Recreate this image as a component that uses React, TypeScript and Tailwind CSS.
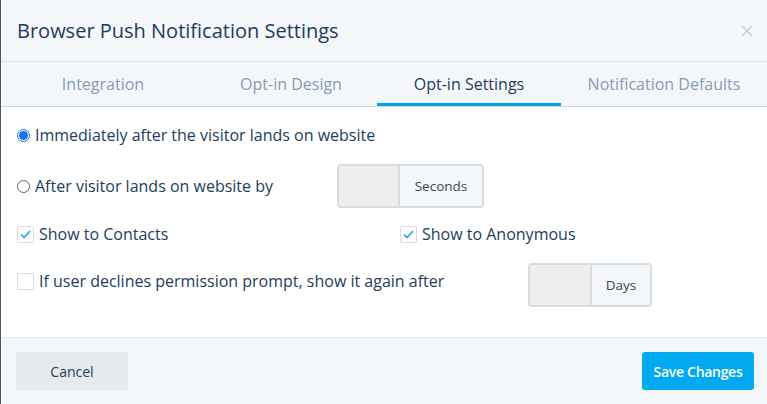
import React from "react";

function Check() {
  return (
    <span className="w-[17px] h-[17px] border border-[#d5dde3] rounded-[2px] bg-white flex items-center justify-center shrink-0">
      <svg width="11" height="9" viewBox="0 0 11 9" fill="none">
        <path d="M1 4.5 L4 7.5 L10 1" stroke="#1ea7e8" strokeWidth="1.6" />
      </svg>
    </span>
  );
}

function EmptyBox() {
  return <span className="w-[17px] h-[17px] border border-[#d5dde3] rounded-[2px] bg-white shrink-0" />;
}

function InputGroup({ label, left, right }: { label: string; left: number; right: number }) {
  return (
    <div className="flex h-[44px] border-2 border-[#d5dde3] rounded-[4px] overflow-hidden">
      <div className="bg-[#eeeeee] border-r-2 border-[#d5dde3]" style={{ width: left }} />
      <div
        className="bg-[#f4f7f9] flex items-center justify-center text-[13.5px] text-[#3a4754]"
        style={{ width: right }}
      >
        {label}
      </div>
    </div>
  );
}

export default function App() {
  return (
    <div
      className="w-[767px] h-[404px] flex flex-col bg-white border-l border-[#555] overflow-hidden"
      style={{ fontFamily: "'Open Sans', Lato, sans-serif" }}
    >
      <div className="h-[62px] bg-[#f4f7f9] border-b border-[#dde3e8] flex items-center justify-between pl-[16px] pr-[14px] shrink-0">
        <div className="text-[20px] text-[#1f3b5a]">Browser Push Notification Settings</div>
        <svg width="12" height="12" viewBox="0 0 12 12">
          <path d="M1 1 L11 11 M11 1 L1 11" stroke="#c3c9ce" strokeWidth="1.3" />
        </svg>
      </div>
      <div className="h-[45px] bg-[#f4f7f9] border-b border-[#d0d7de] flex shrink-0 text-[16px]">
        <div className="w-[204px] flex items-center justify-center text-[#8a9bb0]">Integration</div>
        <div className="w-[172px] flex items-center justify-center text-[#8a9bb0]">Opt-in Design</div>
        <div className="w-[184px] flex items-center justify-center text-[#1f3b5a] font-medium border-b-[3px] border-[#00a4e4] pt-[3px]">
          Opt-in Settings
        </div>
        <div className="w-[206px] flex items-center justify-center text-[#8a9bb0]">Notification Defaults</div>
      </div>
      <div className="flex-1 flex flex-col text-[16px] text-[#233d5a] pl-[16px] pt-[18px]">
        <div className="flex items-center h-[20px] gap-[5px]">
          <span className="w-[13px] h-[13px] rounded-full border border-[#1a73e8] flex items-center justify-center bg-white">
            <span className="w-[9px] h-[9px] rounded-full bg-[#1a73e8]" />
          </span>
          <span>Immediately after the visitor lands on website</span>
        </div>
        <div className="flex items-center mt-[19px] h-[44px]">
          <div className="flex items-center gap-[5px] w-[320px]">
            <span className="w-[13px] h-[13px] rounded-full border border-[#666] bg-white" />
            <span>After visitor lands on website by</span>
          </div>
          <InputGroup label="Seconds" left={61} right={82} />
        </div>
        <div className="flex items-center mt-[16px] h-[20px]">
          <div className="flex items-center gap-[5px] w-[383px]">
            <Check />
            <span>Show to Contacts</span>
          </div>
          <div className="flex items-center gap-[5px]">
            <Check />
            <span>Show to Anonymous</span>
          </div>
        </div>
        <div className="flex items-start mt-[19px]">
          <div className="flex items-center gap-[5px] w-[511px] h-[20px] mt-[8px]">
            <EmptyBox />
            <span>If user declines permission prompt, show it again after</span>
          </div>
          <InputGroup label="Days" left={62} right={58} />
        </div>
      </div>
      <div className="h-[67px] bg-[#f4f7f9] border-t border-[#e3e7ea] flex items-center justify-between pl-[15px] pr-[16px] shrink-0">
        <button className="w-[112px] h-[38px] bg-[#e6eaed] rounded-[3px] text-[14px] text-[#233d5a]">Cancel</button>
        <button className="w-[112px] h-[38px] bg-[#00a9f0] rounded-[3px] text-[14px] text-white font-semibold tracking-[-0.3px] -mr-[3px]">
          Save Changes
        </button>
      </div>
    </div>
  );
}
